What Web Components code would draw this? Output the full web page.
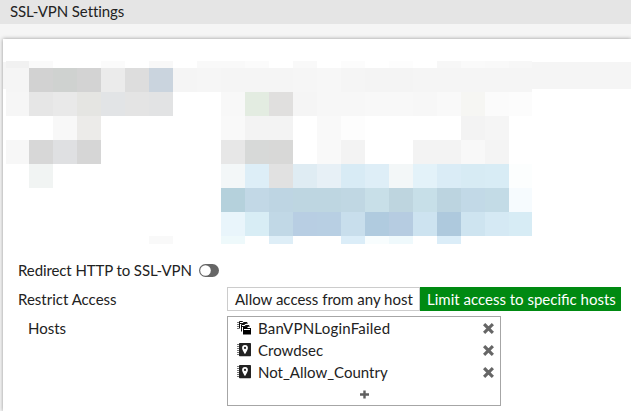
<!DOCTYPE html>
<html lang="en">
<head>
<meta charset="utf-8">
<title>SSL-VPN Settings</title>
<style>
html,body{margin:0;height:100%;overflow:hidden}
body{background:#f5f5f5;font:15px/22px Lato,"Liberation Sans",sans-serif;color:#222}
</style>
</head>
<body>
<settings-page heading="SSL-VPN Settings">
  <redacted-area></redacted-area>
  <form-row label="Redirect HTTP to SSL-VPN" inline><toggle-switch></toggle-switch></form-row>
  <form-row label="Restrict Access">
    <choice-group><choice-option>Allow access from any host</choice-option><choice-option selected>Limit access to specific hosts</choice-option></choice-group>
  </form-row>
  <form-row label="Hosts" nested>
    <host-list>
      <host-item icon="group">BanVPNLoginFailed</host-item>
      <host-item icon="geo">Crowdsec</host-item>
      <host-item icon="geo">Not_Allow_Country</host-item>
    </host-list>
  </form-row>
</settings-page>
<script>
function define(name, build) {
  customElements.define(name, class extends HTMLElement {
    constructor() {
      super();
      this.attachShadow({ mode: 'open' }).innerHTML = build(this);
    }
  });
}

define('settings-page', el => `
<style>
:host{display:flex;flex-direction:column;height:100%}
header{box-sizing:border-box;background:#e5e5e5;height:24px;line-height:22px;padding-left:10px;flex:none;letter-spacing:-.08px}
main{flex:1;min-height:0;margin:15px 0 0 3px;background:#fff;box-shadow:0 0 4px rgba(0,0,0,.4);overflow:visible}
</style>
<header>${el.getAttribute('heading')}</header>
<main><slot></slot></main>`);

/* Pixelated block: one list per 24px band, keyed by column index. */
const bands = [
  {0:'f1f1f1',1:'fafafa',4:'fbfbfb',6:'f8f8f8',8:'f9f9f9',9:'f9f9f9',10:'fbfbfb',12:'f9f9f9',14:'fcfcfc',16:'fdfdfd',18:'f7f7f7',19:'fafafa',20:'f9f9f9',21:'f7f7f7'},
  {0:'f5f5f5',1:'d2d2d2',2:'cfd2d0',3:'d3d3d3',4:'ebebeb',5:'dddddd',6:'cad4de',7:'f5f5f5',8:'f6f6f6',9:'f5f5f5',10:'f5f5f5',11:'f5f5f5',12:'f6f6f6',13:'f7f7f7',14:'f5f5f5',15:'f4f4f4',16:'f4f4f4',17:'f5f5f5',18:'f5f5f5',19:'f5f5f5',20:'f5f5f5',21:'f5f5f5'},
  {0:'f6f6f6',1:'e6e6e6',2:'e9e9e9',3:'e5e5e2',4:'e2e4e6',5:'e4e4e4',6:'e2e3e4',9:'f8f8f8',10:'e3ece1',11:'e0dfde',12:'f5f5f5',13:'f7f7f7',14:'f7f7f7',15:'f8f8f8',16:'f8f8f8',17:'f7f7f7',18:'f9f9f9',19:'f6f6f3',20:'fbfbfb',21:'fcfcfc'},
  {2:'f8f8f8',3:'ecebe9',9:'f9f9f9',10:'f3f3f3',11:'f3f3f3',13:'f9f9f9',14:'fdfdfd',19:'f3f3f3',20:'f5f5f5'},
  {0:'f7f7f7',1:'d7d7d7',2:'dfe0e2',3:'d6d6d6',9:'e7e7e7',10:'d7d9d8',11:'d8d8d7',13:'f9f9f9',14:'f3f3f3',17:'f3f3f3',18:'f3f3f3',19:'f8f8f8',20:'f4f4f4'},
  {1:'f1f4f3',9:'f3f7f8',10:'ddeef7',11:'e1e1e1',12:'dfecf3',13:'e7f0f6',14:'d8ebf5',15:'deeef7',16:'f3f7f8',17:'e3f2f9',18:'daecf6',19:'d7ebf4',20:'d8ecf5',21:'fcfefe'},
  {9:'b5d1dc',10:'c2d8e6',11:'bed5e3',12:'bed6e1',13:'bed6e1',14:'c0d7e3',15:'c8dfe8',16:'bed5df',17:'c7dfe8',18:'bcd4e0',19:'c2d9e7',20:'c3dbe6',21:'f6fbfe'},
  {9:'e9f5fb',10:'d8edf5',11:'c1d8e6',12:'b8cee3',13:'b8cfe3',14:'c8deec',15:'b0cbdf',16:'b6cce1',17:'cde3f0',18:'aec9dd',19:'cee4f0',20:'d5e9f4',21:'d7ecf5'},
  {6:'f9f9f9',9:'eef9fb',11:'deeef7',14:'dbedf8',15:'f8fdfe',16:'eff9fc',18:'dbedf8'}
];
define('redacted-area', () => `
<style>
:host{display:grid;height:183px;margin-top:0;padding-top:22px;
 grid-template-columns:3px 23px repeat(20,24px) 23px 1fr;grid-template-rows:7px repeat(7,24px) 8px}
.edge{grid-row:1/3;margin:1px 0 3px;background:#f5f5f5}
.l{grid-column:1}.r{grid-column:24}
</style>
<i class="edge l"></i><i class="edge r"></i>
${bands.map((b, r) => Object.entries(b).map(([c, v]) =>
  `<i style="grid-area:${r + 1}/${+c + 2};background:#${v}"></i>`).join('')).join('')}`);

define('form-row', el => `
<style>
:host{display:grid;grid-template-columns:209px 1fr;align-items:start;padding-left:15px;margin-top:5px;min-height:24px;line-height:24px;white-space:nowrap}
:host([inline]){display:flex;gap:7px;align-items:center;margin-top:14px}
:host([inline]) label{letter-spacing:-.1px}
:host([nested]) label{padding-left:10px}
</style>
<label>${el.getAttribute('label')}</label><slot></slot>`);

define('toggle-switch', () => `
<style>:host{display:block;height:13px}svg{display:block}</style>
<svg width="20" height="13" viewBox="0 0 20 13"><rect width="20" height="13" rx="6.5" fill="#666"/><circle cx="6.5" cy="6.5" r="5.3" fill="#fff"/></svg>`);

define('choice-group', () => `<style>:host{display:flex}</style><slot></slot>`);

define('choice-option', () => `
<style>
:host{display:block;box-sizing:border-box;height:24px;line-height:22px;padding:0 7px;border:1px solid #ccc;background:#fff;width:193px}
:host([selected]){background:#008a12;border-color:#008a12;color:#fff;width:201px;padding:0 6px}
</style><slot></slot>`);

define('host-list', () => `
<style>
:host{display:block;box-sizing:border-box;width:274px;height:90px;border:1px solid #a6a6a6}
.add{display:flex;justify-content:center;padding-top:7px}
</style>
<slot></slot>
<div class="add"><svg width="9" height="9" viewBox="0 0 9 9"><path d="M3.300 0.500h2.400v2.800H9v2.400H5.700V8.500H3.300V5.700H0V3.300h3.300z" fill="#606060"/></svg></div>`);

const icons = {
  group: `<path d="M1 1h2v1H1zM1 3h2v1H1zM1 5h2v1H1zM1 7h2v1H1z" fill="#777"/>
   <path d="M3.500 7.500v-7h3l1 1h3.500v1.500" fill="#fff" stroke="#111"/><path d="M3.500 2.500h7" stroke="#111"/>
   <path d="M5.500 10.500v-7h3l1 1h3.500v1.500" fill="#fff" stroke="#111"/><path d="M5.500 5.500h7" stroke="#111"/>
   <path d="M7 6h4l1 1h3v6.500H7z" fill="#000"/><path d="M8 8.500h6" stroke="#fff"/>`,
  geo: `<path d="M1 1h2v1H1zM1 3h2v1H1zM1 5h2v1H1zM1 7h2v1H1zM1 9h2v1H1zM1 11h2v1H1z" fill="#777"/>
   <rect x="3" width="12" height="13.300" rx=".7" fill="#222"/>
   <path d="M9 2a2.900 2.900 0 0 0-2.900 2.900C6.100 7 9 11 9 11s2.900-4 2.900-6.100A2.900 2.900 0 0 0 9 2z" fill="#fff"/><circle cx="9" cy="4.900" r="1.100" fill="#222"/>`
};
define('host-item', el => `
<style>
:host{display:flex;align-items:center;height:22px;line-height:22px;padding:0 6px 0 8px}
.kind{margin-right:7px;flex:none}.name{flex:1}
:host([icon=group]) .name{letter-spacing:.22px}
</style>
<svg class="kind" width="15" height="14" viewBox="0 0 15 14">${icons[el.getAttribute('icon')]}</svg>
<span class="name"><slot></slot></span>
<svg width="11" height="11" viewBox="0 0 11 11"><path d="M2.200 2.200l6.600 6.600M8.800 2.200l-6.600 6.600" stroke="#666" stroke-width="3.100" stroke-linecap="square"/></svg>`);
</script>
</body>
</html>
